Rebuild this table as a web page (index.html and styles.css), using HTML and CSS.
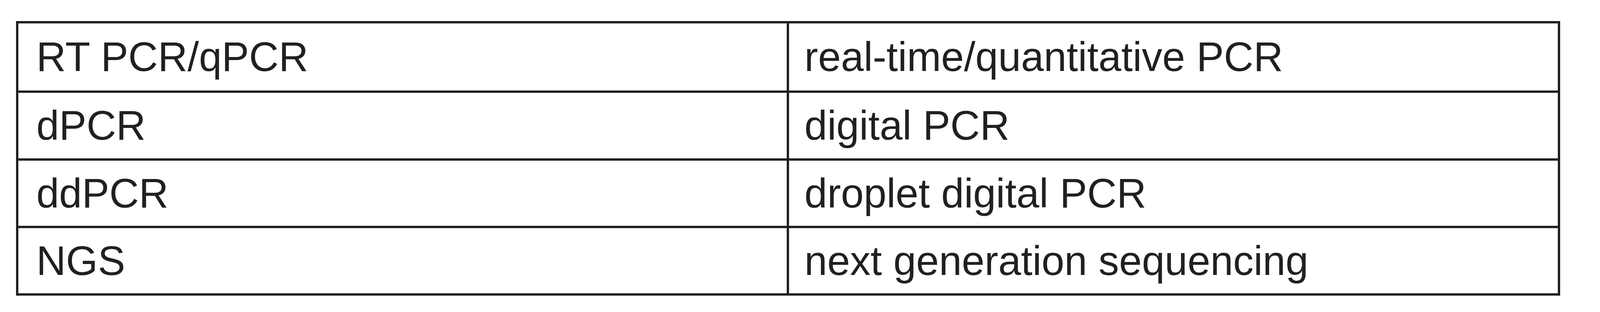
FILE: index.html
```html
<!DOCTYPE html>
<html lang="en">
<head>
<meta charset="utf-8">
<title>Abbreviations</title>
<link rel="stylesheet" href="styles.css">
</head>
<body>
<div class="abbr-table">
  <div class="cell term">RT PCR/qPCR</div>
  <div class="cell def">real-time/quantitative PCR</div>
  <div class="cell term">dPCR</div>
  <div class="cell def">digital PCR</div>
  <div class="cell term">ddPCR</div>
  <div class="cell def">droplet digital PCR</div>
  <div class="cell term">NGS</div>
  <div class="cell def">next generation sequencing</div>
</div>
</body>
</html>
```
FILE: styles.css
```css
html, body {
  margin: 0;
  padding: 0;
  background: #ffffff;
}

body {
  font-family: "Liberation Sans", Arial, sans-serif;
  color: #231f20;
}

.abbr-table {
  display: grid;
  grid-template-columns: 50% 50%;
  grid-template-rows: 178px 174px 173px 173px;
  width: 96.5vw;
  box-sizing: border-box;
  margin: 54px 0 0 1vw;
  border-top: 6px solid #231f20;
  border-left: 6px solid #231f20;
}

.cell {
  display: flex;
  align-items: center;
  box-sizing: border-box;
  border-right: 6px solid #231f20;
  border-bottom: 6px solid #231f20;
  font-size: 105px;
  line-height: normal;
  white-space: nowrap;
  overflow: hidden;
}

.term {
  padding-left: 46px;
}

.def {
  padding-left: 39px;
}
```
